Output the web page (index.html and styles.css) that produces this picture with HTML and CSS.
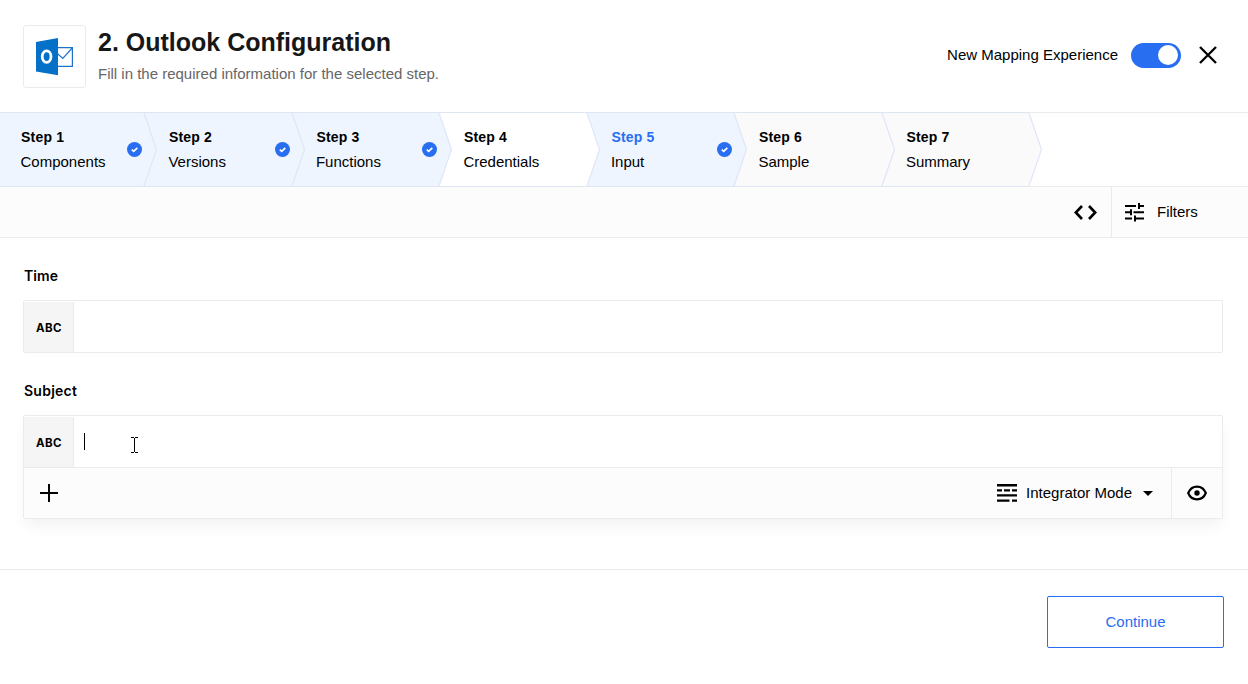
FILE: index.html
```html
<!DOCTYPE html>
<html lang="en">
<head>
<meta charset="utf-8">
<title>Outlook Configuration</title>
<link rel="stylesheet" href="styles.css">
</head>
<body>
<header class="header">
  <div class="logo">
    <svg width="38" height="38" viewBox="0 0 38 38">
      <path d="M21 9.6H36.4V28.3H21" fill="#fff" stroke="#1a73c9" stroke-width="1.2"/>
      <path d="M21 15.2L26.8 20.4L36.2 10" fill="none" stroke="#1a73c9" stroke-width="1.2"/>
      <path d="M0 4L22 0V37.2L0 33.5Z" fill="#0470c8"/>
      <ellipse cx="10.6" cy="18.6" rx="4.4" ry="5.8" fill="none" stroke="#fff" stroke-width="2.8"/>
    </svg>
  </div>
  <div class="heading">
    <h1 class="title">2. Outlook Configuration</h1>
    <p class="subtitle">Fill in the required information for the selected step.</p>
  </div>
  <span class="toggle-label">New Mapping Experience</span>
  <span class="toggle"><span class="knob"></span></span>
  <svg class="close" width="18" height="18" viewBox="0 0 18 18"><path d="M1 1L17 17M17 1L1 17" stroke="#000" stroke-width="2.3" fill="none"/></svg>
</header>
<nav class="steps">
  <div class="step first done"><div><b>Step 1</b><span>Components</span></div><svg class="check" viewBox="0 0 15 15"><circle cx="7.5" cy="7.5" r="7.5"/><path d="M4.8 7.6L6.7 9.4L10.3 5.8"/></svg><svg class="chevron" viewBox="0 0 14 73"><path d="M0 0L12.5 36.5L0 73"/></svg></div>
  <div class="step done"><div><b>Step 2</b><span>Versions</span></div><svg class="check" viewBox="0 0 15 15"><circle cx="7.5" cy="7.5" r="7.5"/><path d="M4.8 7.6L6.7 9.4L10.3 5.8"/></svg><svg class="chevron" viewBox="0 0 14 73"><path d="M0 0L12.5 36.5L0 73"/></svg></div>
  <div class="step done"><div><b>Step 3</b><span>Functions</span></div><svg class="check" viewBox="0 0 15 15"><circle cx="7.5" cy="7.5" r="7.5"/><path d="M4.8 7.6L6.7 9.4L10.3 5.8"/></svg><svg class="chevron" viewBox="0 0 14 73"><path d="M0 0L12.5 36.5L0 73"/></svg></div>
  <div class="step open"><div><b>Step 4</b><span>Credentials</span></div><svg class="chevron" viewBox="0 0 14 73"><path d="M0 0L12.5 36.5L0 73"/></svg></div>
  <div class="step done current"><div><b>Step 5</b><span>Input</span></div><svg class="check" viewBox="0 0 15 15"><circle cx="7.5" cy="7.5" r="7.5"/><path d="M4.8 7.6L6.7 9.4L10.3 5.8"/></svg><svg class="chevron" viewBox="0 0 14 73"><path d="M0 0L12.5 36.5L0 73"/></svg></div>
  <div class="step"><div><b>Step 6</b><span>Sample</span></div><svg class="chevron" viewBox="0 0 14 73"><path d="M0 0L12.5 36.5L0 73"/></svg></div>
  <div class="step"><div><b>Step 7</b><span>Summary</span></div><svg class="chevron" viewBox="0 0 14 73"><path d="M0 0L12.5 36.5L0 73"/></svg></div>
  <div class="rest"></div>
</nav>
<div class="toolbar">
  <svg class="code" width="23" height="15" viewBox="0 0 23 15"><path d="M8 1L1.8 7.5L8 14M15 1L21.2 7.5L15 14" fill="none" stroke="#000" stroke-width="2.6"/></svg>
  <div class="filters">
    <svg width="19" height="19" viewBox="0 0 19 19"><path d="M0 3H11M13 3H19M14 0V6M0 9.2H6M6 6.2V12.2M8.5 9.2H19M0 15.5H7M9 15.5H19M10 12.5V18.5" fill="none" stroke="#000" stroke-width="2"/></svg>
    <span>Filters</span>
  </div>
</div>
<main class="form">
  <label class="label time">Time</label>
  <div class="field"><div class="row"><span class="type">ABC</span></div></div>
  <label class="label subject">Subject</label>
  <div class="field active">
    <div class="row"><span class="type">ABC</span><span class="caret"></span>
      <svg class="ibeam" width="8" height="17" viewBox="0 0 8 17"><path d="M0 .5H3M4 .5H7M3.5 1V15M0 15.5H3M4 15.5H7" fill="none" stroke="#000"/></svg>
    </div>
    <div class="tools">
      <svg class="plus" width="18" height="18" viewBox="0 0 18 18"><path d="M9 0V18M0 9H18" stroke="#000" stroke-width="2"/></svg>
      <div class="mode">
        <svg width="20" height="18" viewBox="0 0 20 18"><path d="M0 1.2H20M0 6.4H5M7 6.4H13M15 6.4H20M0 11.4H20M0 16.6H12.5M15 16.6H20" stroke="#000" stroke-width="2.4"/></svg>
        <span>Integrator Mode</span>
        <svg class="arrow" width="10" height="5" viewBox="0 0 10 5"><path d="M0 0H10L5 5Z"/></svg>
      </div>
      <div class="view"><svg width="20" height="16" viewBox="0 0 20 16"><path d="M1.2 8C4.6-.5 15.4-.5 18.8 8C15.4 16.5 4.6 16.5 1.2 8Z" fill="none" stroke="#000" stroke-width="2.2"/><circle cx="10" cy="8" r="2.7"/></svg></div>
    </div>
  </div>
</main>
<footer class="footer"><button class="continue">Continue</button></footer>
</body>
</html>
```
FILE: styles.css
```css
* { box-sizing: border-box; }
body {
  margin: 0;
  height: 684px;
  overflow: hidden;
  background: #fff;
  color: #000;
  font: 15px/20px "Liberation Sans", Arial, sans-serif;
}
svg { display: block; flex: none; }

.header { display: flex; align-items: center; height: 112px; padding: 0 31px 0 23px; }
.logo {
  display: flex; align-items: center; justify-content: center;
  width: 63px; height: 63px; padding: 1px 0 0 1px;
  border: 1px solid #ebebeb; border-radius: 3px;
}
.heading { flex: 1; padding-left: 12px; }
.title { margin: 0; font-size: 25px; line-height: 32px; font-weight: 700; color: #171717; white-space: nowrap; }
.subtitle { margin: 6px 0 2px; color: #666; line-height: 20px; }
.toggle-label { margin-bottom: 2px; }
.toggle { width: 50px; height: 25px; margin: 0 18px 1px 13px; padding: 2px 3px; border-radius: 13px; background: #286ef1; display: flex; justify-content: flex-end; }
.knob { width: 20px; height: 20px; border-radius: 50%; background: #fff; }
.close { margin-bottom: 2px; }

.steps { display: flex; height: 75px; }
.step {
  position: relative; display: flex; justify-content: space-between;
  width: 147.5px; padding: 14px 2px 0 24.4px;
  background: #fafafa;
  border-top: 1px solid #dfe6f3; border-bottom: 1px solid #dfe6f3;
}
.step.first { width: 144px; padding-left: 20.5px; }
.step b, .step span { display: block; line-height: 20px; }
.step b { margin-bottom: 5px; font-size: 14px; letter-spacing: .2px; padding-left: .5px; }
.step.done { background: #eef5fe; }
.step.open { background: #fff; }
.step.current b { color: #286ef1; }
.check { width: 15px; height: 15px; margin-top: 15px; }
.check circle { fill: #286ef1; }
.check path { fill: none; stroke: #fff; stroke-width: 1.7; }
.chevron { position: absolute; z-index: 1; right: -14px; top: 0; width: 14px; height: 73px; overflow: visible; }
.chevron path { fill: #fafafa; stroke: #dfe6f7; stroke-width: 1.2; }
.done .chevron path { fill: #eef5fe; }
.open .chevron path { fill: #fff; }
.rest { flex: 1; border-top: 1px solid #ebebeb; border-bottom: 1px solid #ebebeb; }

.toolbar { display: flex; justify-content: flex-end; align-items: center; height: 51px; background: #fcfcfc; border-bottom: 1px solid #ebebeb; }
.code { margin-right: 14px; }
.filters { display: flex; align-items: center; gap: 13px; width: 137px; height: 50px; padding-left: 13px; border-left: 1px solid #ebebeb; }

.form { padding: 28px 25px 0 23px; height: 331px; }
.label { display: block; height: 20px; margin-left: 1px; font: 600 14px/20px Inter, sans-serif; }
.time { margin-bottom: 14px; letter-spacing: .05px; }
.subject { margin-bottom: 14px; letter-spacing: .25px; }
.field { margin-bottom: 28px; border: 1px solid #ebebeb; border-radius: 2px; }
.row { position: relative; display: flex; align-items: center; height: 51px; }
.type {
  display: flex; align-items: center; justify-content: center;
  width: 50px; height: 50px; margin-top: 1px; padding: 2px 0 0 1px;
  background: #f5f5f5; border-right: 1px solid #ebebeb;
  font: 700 11.5px/16px Inter, sans-serif; letter-spacing: .4px;
}
.caret { width: 1px; height: 17px; margin-left: 10px; background: #000; }
.ibeam { position: absolute; left: 107px; top: 21px; }
.active { box-shadow: 0 9px 14px -2px rgba(0, 0, 0, .05); }
.active .row { background: #fff; }
.tools { display: flex; align-items: center; height: 51px; background: #fcfcfc; border-top: 1px solid #ebebeb; }
.plus { margin-left: 16px; }
.mode { display: flex; align-items: center; margin-left: auto; gap: 9px; padding-right: 18px; }
.arrow { margin-left: 2px; }
.view { display: flex; align-items: center; justify-content: center; width: 51px; height: 50px; border-left: 1px solid #ebebeb; }

.footer { display: flex; justify-content: flex-end; padding: 26px 24px 0; border-top: 1px solid #ebebeb; }
.continue { width: 177px; height: 52px; padding: 0; border: 1px solid #286ef1; border-radius: 2px; background: #fff; color: #286ef1; font: 15px/20px "Liberation Sans", Arial, sans-serif; }
```
